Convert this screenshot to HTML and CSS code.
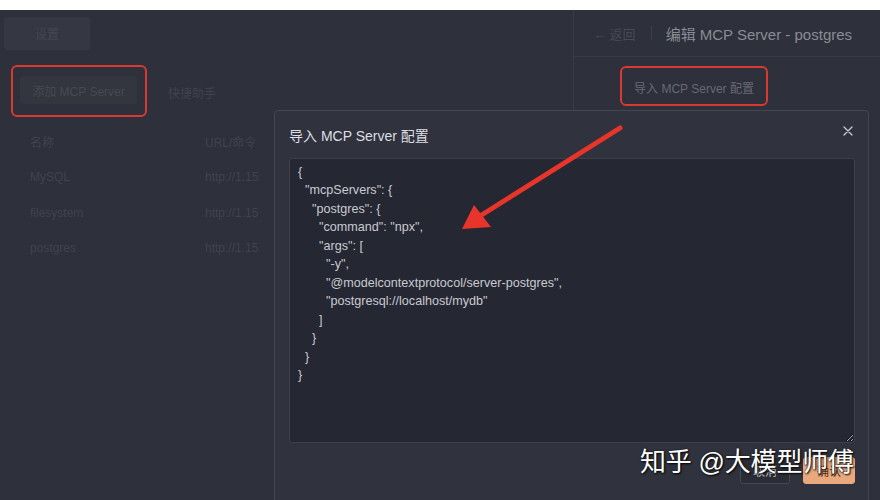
FILE: index.html
```html
<!DOCTYPE html>
<html lang="zh">
<head>
<meta charset="utf-8">
<title>导入 MCP Server 配置</title>
<link rel="stylesheet" href="styles.css">
</head>
<body>
<div class="strip"></div>
<div class="app">
  <div class="left">
    <div class="topbtn">设置</div>
    <div class="tabs">
      <div class="redbox redbox-add"><div class="addbtn">添加 MCP Server</div></div>
      <div class="tab">快捷助手</div>
    </div>
    <div class="table">
      <div class="row"><span class="c1">名称</span><span class="c2">URL/命令</span></div>
      <div class="row"><span class="c1">MySQL</span><span class="c2">http://1.15</span></div>
      <div class="row"><span class="c1">filesystem</span><span class="c2">http://1.15</span></div>
      <div class="row"><span class="c1">postgres</span><span class="c2">http://1.15</span></div>
    </div>
  </div>
  <div class="right">
    <div class="rhead">
      <span class="back">← 返回</span>
      <span class="sep"></span>
      <span class="rtitle">编辑 MCP Server - postgres</span>
    </div>
    <div class="rbody">
      <div class="redbox redbox-import"><div class="importbtn">导入 MCP Server 配置</div></div>
    </div>
  </div>
</div>

<div class="dialog">
  <div class="dhead">
    <span class="dtitle">导入 MCP Server 配置</span>
    <span class="close">
      <svg width="10" height="10" viewBox="0 0 10 10"><path d="M1 1L9 9M9 1L1 9" stroke="#c9cad0" stroke-width="1.3" stroke-linecap="round"/></svg>
    </span>
  </div>
  <textarea class="code" readonly spellcheck="false">{
  "mcpServers": {
    "postgres": {
      "command": "npx",
      "args": [
        "-y",
        "@modelcontextprotocol/server-postgres",
        "postgresql://localhost/mydb"
      ]
    }
  }
}</textarea>
  <div class="dfoot">
    <button class="btn cancel">取消</button>
    <button class="btn ok">确认</button>
  </div>
</div>

<svg class="arrow" width="880" height="500" viewBox="0 0 880 500">
  <line x1="620" y1="128" x2="480" y2="216" stroke="#e8352b" stroke-width="5" stroke-linecap="round"/>
  <polygon points="462,229 474,205 491,227" fill="#e8352b"/>
</svg>

<div class="watermark">知乎 @大模型师傅</div>
</body>
</html>
```

FILE: styles.css
```css
* { box-sizing: border-box; }
html, body {
  margin: 0;
  padding: 0;
  width: 880px;
  height: 500px;
  overflow: hidden;
  background: #2e303b;
  font-family: "Liberation Sans", "Noto Sans CJK SC", sans-serif;
}
.strip { height: 10px; background: #ffffff; }
.app { display: flex; height: 490px; }

.left { width: 573px; padding: 7px 0 0 4px; }
.topbtn {
  width: 86px; height: 33px;
  background: #353742;
  border-radius: 3px;
  color: #454750;
  font-size: 12px;
  display: flex; align-items: center; justify-content: center;
}
.tabs { display: flex; align-items: center; margin-top: 15px; margin-left: 7px; }
.redbox { border: 2px solid #d9392e; border-radius: 6px; }
.redbox-add { width: 136px; height: 52px; padding: 9px 0 0 7px; }
.addbtn {
  width: 117px; height: 28px;
  background: #33353f;
  border-radius: 3px;
  color: #474953;
  font-size: 12px;
  display: flex; align-items: center; justify-content: center;
}
.tab { margin-left: 21px; margin-top: 2px; font-size: 12px; color: #41434d; }

.table { margin-top: 7px; padding-left: 26px; }
.row { display: flex; height: 35.5px; align-items: center; font-size: 12px; color: #41434d; }
.c1 { width: 175px; }

.right { flex: 1; border-left: 1px solid #393b46; }
.rhead {
  height: 47px;
  border-bottom: 1px solid #383a45;
  display: flex; align-items: center;
  padding-left: 19px;
}
.back { font-size: 13px; color: #474953; }
.sep { width: 1px; height: 14px; background: #3d3f49; margin: 0 14px 0 15px; }
.rtitle { font-size: 15px; color: #8a8c95; }
.rbody { padding: 9px 0 0 46px; }
.redbox-import {
  width: 148px; height: 40px;
  display: flex; align-items: center; justify-content: center;
  padding-top: 3px;
}
.importbtn { font-size: 12px; color: #676973; }

.dialog {
  position: absolute;
  left: 274px; top: 110px;
  width: 595px; height: 400px;
  background: #30323d;
  border: 1px solid #444650;
  border-radius: 4px;
  padding: 0 13px 0 14px;
}
.dhead {
  height: 47px;
  display: flex; align-items: center; justify-content: space-between;
}
.dtitle { font-size: 14px; color: #dedfe4; }
.close { display: flex; margin-right: 2px; margin-top: -7px; }
.code {
  display: block;
  width: 566px; height: 285px;
  background: #252733;
  border: 1px solid #3d3f4a;
  border-radius: 3px;
  padding: 4px 8px;
  color: #c9cad0;
  font-family: "Liberation Sans", "Noto Sans CJK SC", sans-serif;
  font-size: 12.6px;
  line-height: 18.45px;
  white-space: pre;
  resize: both;
  outline: none;
  overflow: hidden;
  color-scheme: dark;
}
.dfoot { display: flex; justify-content: flex-end; gap: 13px; margin-top: 14px; }
.btn {
  height: 27px;
  border-radius: 3px;
  font-size: 12px;
  font-family: "Liberation Sans", "Noto Sans CJK SC", sans-serif;
  padding: 0;
}
.cancel { width: 50px; background: #2a2c36; border: 1px solid #464852; color: #c3c4ca; }
.ok { width: 52px; background: #e9a97d; border: 1px solid #e9a97d; color: #4a2e18; }

.arrow { position: absolute; left: 0; top: 0; pointer-events: none; }

.watermark {
  position: absolute;
  left: 640px; top: 445px;
  font-size: 26px;
  line-height: 34px;
  color: #ffffff;
  letter-spacing: -0.2px;
  text-shadow: 0 0 2px #1a1a1a, 1px 1px 2px #000000;
  white-space: nowrap;
}
```
